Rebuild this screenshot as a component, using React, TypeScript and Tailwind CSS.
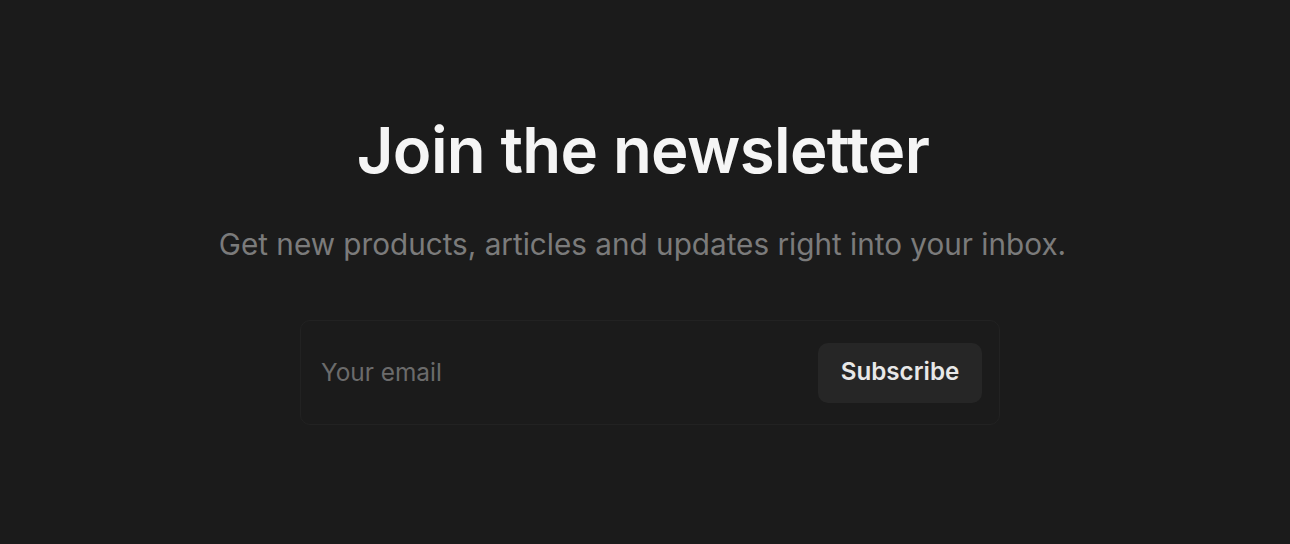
import React from "react";

const App: React.FC = () => {
  return (
    <div
      className="flex h-[544px] w-full flex-col items-center bg-[#1b1b1b]"
      style={{ fontFamily: "Inter, 'Noto Sans', sans-serif" }}
    >
      <h1 className="mr-[4px] mt-[110px] text-[63.5px] font-semibold leading-[80px] tracking-[-0.01em] text-[#f5f5f5]">
        Join the newsletter
      </h1>
      <p className="mr-[5px] mt-[36px] text-[29.7px] leading-[36px] text-[#7b7b7b]">
        Get new products, articles and updates right into your inbox.
      </p>
      <form
        className="ml-[10px] mt-[58px] flex h-[105px] w-[700px] items-center rounded-[10px] border border-[#222222] bg-[#1b1b1b] pl-[20px] pr-[17px]"
        onSubmit={(e) => e.preventDefault()}
      >
        <input
          type="email"
          placeholder="Your email"
          className="flex-1 bg-transparent text-[24.4px] text-[#e5e5e5] outline-none placeholder:text-[#6b6b6b]"
        />
        <button className="h-[60px] w-[164px] rounded-[10px] bg-[#262626] text-[24.2px] font-semibold text-[#e8e8e8]">
          Subscribe
        </button>
      </form>
    </div>
  );
};

export default App;
